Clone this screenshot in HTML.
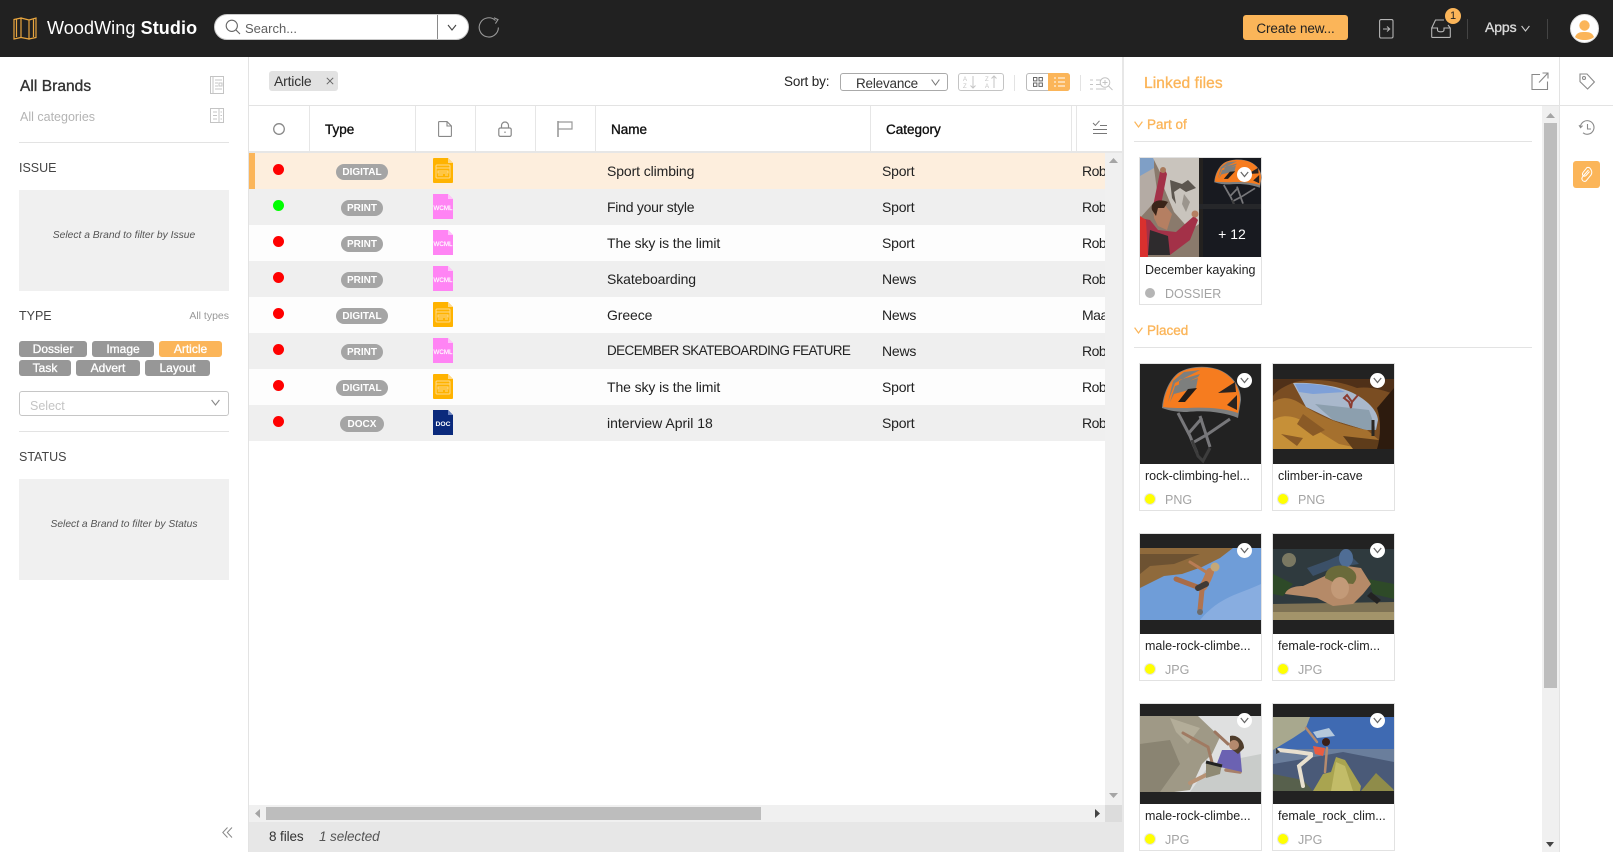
<!DOCTYPE html>
<html><head><meta charset="utf-8"><title>WoodWing Studio</title>
<style>
*{box-sizing:border-box}
html,body{margin:0;padding:0;width:1613px;height:852px;overflow:hidden;background:#fff;font-family:"Liberation Sans",sans-serif;color:#222}
.a{position:absolute}
.t{position:absolute;white-space:nowrap;line-height:18px}
.sb{-webkit-text-stroke:.35px currentColor}
svg{position:absolute;display:block;overflow:visible}
.b{filter:blur(.35px)}
.row{position:absolute;left:249px;width:856px;height:36px}
.row .dot{position:absolute;left:24px;top:11px;width:11px;height:11px;border-radius:50%;background:#f00}
.row .pill{position:absolute;top:11px;height:16px;border-radius:8px;background:#a5a5a5;color:#fff;font-size:10px;font-weight:700;text-align:center;line-height:17px}
.row .n{position:absolute;left:358px;top:9px;font-size:14px;line-height:18px;white-space:nowrap;letter-spacing:-.1px}
.row .c{position:absolute;left:633px;top:9px;font-size:14px;line-height:18px;letter-spacing:-.2px}
.row .r{position:absolute;left:833px;top:9px;width:23px;overflow:hidden;font-size:14px;line-height:18px;letter-spacing:-.5px}
.row svg{left:184px;top:5px}
.chip{position:absolute;height:16px;border-radius:3px;background:#979797;color:#fff;font-size:12px;text-align:center;line-height:16px;-webkit-text-stroke:.3px #fff}
.sep{position:absolute;top:106px;width:1px;height:46px;background:#e6e6e6}
.card{position:absolute;width:123px;height:148px;border:1px solid #e2e2e2;background:#fff}
.card svg.ph{left:0;top:0}
.card .ti{position:absolute;left:5px;top:103px;font-size:12.5px;line-height:18px;white-space:nowrap}
.card .d{position:absolute;left:5px;top:130px;width:10px;height:10px;border-radius:50%;background:#ff0;box-shadow:0 0 0 1px #e8e8e8}
.card .k{position:absolute;left:25px;top:127px;font-size:12.5px;line-height:18px;color:#a3a3a3}
.ch{position:absolute;left:97px;top:9px;width:15px;height:15px;border-radius:50%;background:#fff}
.ch svg{left:3px;top:4px}
</style></head><body>
<svg width="0" height="0" style="position:absolute"><defs>
<symbol id="dig" viewBox="0 0 20 25"><path d="M0 1Q0 0 1 0H15L20 5V24Q20 25 19 25H1Q0 25 0 24Z" fill="#ffb300"/><path d="M15 0L20 5H15Z" fill="#ffd98a"/><g fill="none" stroke="#ffd98a" stroke-width="1"><rect x="3" y="7" width="14" height="13" rx="1"/><path d="M3 10H17M5 13H15V15H5ZM5 17H10M12 17H15"/></g></symbol>
<symbol id="wcml" viewBox="0 0 20 25"><path d="M0 0H15L20 5V25H0Z" fill="#ff84f4"/><path d="M15 0L20 5H15Z" fill="#ffc4fa"/><text x="10" y="16" font-size="6.2" fill="#fff" stroke="#fff" stroke-width=".15" text-anchor="middle" font-family="Liberation Sans">WCML</text></symbol>
<symbol id="doc" viewBox="0 0 20 25"><path d="M0 0H15L20 5V25H0Z" fill="#0b2a7c"/><path d="M15 0L20 5H15Z" fill="#6b82bd"/><text x="10" y="16" font-size="6.8" font-weight="700" fill="#fff" text-anchor="middle" font-family="Liberation Sans">DOC</text></symbol>
<symbol id="helmet" viewBox="0 0 121 100" overflow="visible">
<g fill="none" stroke="#77777a" stroke-width="3"><path d="M38 49L50 72 57 89M60 52L70 83M90 55L68 70 54 78M62 54L48 70"/></g>
<g fill="none" stroke="#3d3d3d" stroke-width="3"><path d="M52 76L58 92 63 97 70 84"/></g>
<path d="M22 44C23 30 29 16 38 9 50 1 70 1 82 7 94 13 101 24 101 36L98 54C84 48 64 46 47 48 38 48 30 47 22 44Z" fill="#7d7f80"/>
<path d="M23 43C24 30 30 16 39 9 50 2 70 2 81 7 93 13 100 24 100 36L98 49C84 44 64 43 47 44 38 44 30 44 23 43Z" fill="#f67c1f"/>
<path d="M28 38L35 19 60 6 44 8 33 17Z M39 16L60 10 58 13 39 22Z M35 22L58 14 56 24 34 30 30 38Z" fill="#7d7f7e"/>
<path d="M48 25L57 24 45 38 38 38Z" fill="#221c18"/>
<path d="M78 29L95 18 96 28Z" fill="#2a2320"/><path d="M87 41L97 31 97 46Z" fill="#2a2320"/></symbol>
</defs></svg>

<!-- top bar -->
<div class="a" style="left:0;top:0;width:1613px;height:57px;background:#212121"></div>
<svg style="left:13px;top:17px" width="24" height="23" viewBox="0 0 24 23" fill="none" stroke="#e9a63f" stroke-width="1.2"><path d="M1 2.5L8 1V20.5L1 22ZM8 1L16 3V22L8 20.5ZM16 3L23 1V20.5L16 22ZM3.5 2.5V20M20.5 2.5V20"/></svg>
<div class="t" style="left:47px;top:19px;font-size:18px;color:#fff;letter-spacing:.1px">WoodWing <b>Studio</b></div>
<div class="a" style="left:214px;top:14px;width:255px;height:26px;border-radius:13px;background:#fff;border:1px solid #c9c9c9"></div>
<div class="a" style="left:437px;top:15px;width:1px;height:24px;background:#8a8a8a"></div>
<svg style="left:225px;top:19px" width="16" height="16" viewBox="0 0 16 16" fill="none" stroke="#666" stroke-width="1.1"><circle cx="6.8" cy="6.8" r="5.6"/><path d="M10.8 10.8L15 15"/></svg>
<div class="t" style="left:245px;top:20px;font-size:13px;color:#5f5f5f">Search...</div>
<svg style="left:447px;top:24px" width="10" height="7" viewBox="0 0 10 7" fill="none" stroke="#444" stroke-width="1.1"><path d="M1 1L5 6 9 1"/></svg>
<svg style="left:478px;top:17px" width="22" height="21" viewBox="0 0 22 21" fill="none" stroke="#9a9a9a" stroke-width="1.1"><path d="M17.5 3.5A9.6 9.6 0 1 0 20.4 10.5M16 .8L20 2.6 17.4 6.6"/></svg>
<div class="a" style="left:1243px;top:15px;width:105px;height:25px;border-radius:3px;background:#fbb559;color:#222;font-size:13.5px;line-height:27px;text-align:center;letter-spacing:-.1px">Create new...</div>
<svg style="left:1379px;top:19px" width="15" height="20" viewBox="0 0 15 20" fill="none" stroke="#b5b5b5" stroke-width="1.1"><rect x=".6" y=".6" width="13.4" height="18.4" rx="1.5"/><path d="M4 10H10.5M8 7.5L10.7 10 8 12.5"/></svg>
<svg style="left:1431px;top:19px" width="20" height="20" viewBox="0 0 20 20" fill="none" stroke="#b5b5b5" stroke-width="1.1"><path d="M.7 9L4.5 1H13M17 6L19.3 9V17.6Q19.3 18.4 18.5 18.4H1.5Q.7 18.4 .7 17.6V9H6.5V11C6.5 13.4 13 13.4 13 11V9H19.3"/></svg>
<div class="a" style="left:1445px;top:8px;width:16px;height:16px;border-radius:50%;background:#fbb559;color:#222;font-size:11px;line-height:16px;text-align:center">1</div>
<div class="a" style="left:1467px;top:19px;width:1px;height:20px;background:#444"></div>
<div class="t sb" style="left:1485px;top:18px;font-size:14px;color:#d9d9d9;letter-spacing:-.1px">Apps</div>
<svg style="left:1521px;top:25px" width="9" height="7" viewBox="0 0 9 7" fill="none" stroke="#ccc" stroke-width="1.1"><path d="M.6 1L4.5 6 8.4 1"/></svg>
<div class="a" style="left:1547px;top:19px;width:1px;height:20px;background:#444"></div>
<svg style="left:1570px;top:14px" width="29" height="29" viewBox="0 0 29 29"><circle cx="14.5" cy="14.5" r="14" fill="#fff" stroke="#ddd"/><circle cx="14.5" cy="11.5" r="5.2" fill="#fbb559"/><path d="M5 23C7 18 11 18 14.5 18S22 18 24 23C20 27 9 27 5 23Z" fill="#fbb559"/></svg>

<!-- sidebar -->
<div class="a" style="left:248px;top:57px;width:1px;height:795px;background:#e3e3e3"></div>
<div class="t sb" style="left:20px;top:78px;font-size:15.5px;color:#333;letter-spacing:.05px">All Brands</div>
<svg style="left:210px;top:76px" width="15" height="18" viewBox="0 0 15 18" fill="none" stroke="#c4c4c4"><rect x=".5" y=".5" width="13" height="17"/><path d="M3 1V17M5 4H12M5 7H8M5 10H8M5 13H12"/><rect x="9" y="7" width="3" height="3"/></svg>
<div class="t" style="left:20px;top:108px;font-size:12.5px;color:#b4b4b4">All categories</div>
<svg style="left:210px;top:108px" width="14" height="15" viewBox="0 0 14 15" fill="none" stroke="#c4c4c4"><rect x=".5" y=".5" width="13" height="14"/><path d="M9 1V14M3 4H7M3 7.5H7M3 11H7M10.5 4H12M10.5 7.5H12M10.5 11H12"/></svg>
<div class="a" style="left:19px;top:142px;width:210px;height:1px;background:#e3e3e3"></div>
<div class="t" style="left:19px;top:159px;font-size:12.5px;color:#444">ISSUE</div>
<div class="a" style="left:19px;top:190px;width:210px;height:101px;background:#f0f0f0"></div>
<div class="t" style="left:19px;width:210px;top:227px;text-align:center;font-size:10.3px;font-style:italic;color:#555">Select a Brand to filter by Issue</div>
<div class="t" style="left:19px;top:307px;font-size:12.5px;color:#444">TYPE</div>
<div class="t" style="left:129px;width:100px;top:307px;text-align:right;font-size:10.5px;color:#999">All types</div>
<div class="chip" style="left:19px;top:341px;width:68px">Dossier</div>
<div class="chip" style="left:92px;top:341px;width:62px">Image</div>
<div class="chip" style="left:159px;top:341px;width:63px;background:#fbb559">Article</div>
<div class="chip" style="left:19px;top:360px;width:52px">Task</div>
<div class="chip" style="left:76px;top:360px;width:64px">Advert</div>
<div class="chip" style="left:145px;top:360px;width:65px">Layout</div>
<div class="a" style="left:19px;top:391px;width:210px;height:25px;border:1px solid #c6c6c6;border-radius:3px"></div>
<div class="t" style="left:30px;top:397px;font-size:12.5px;color:#c4c4c4">Select</div>
<svg style="left:211px;top:399px" width="9" height="7" viewBox="0 0 9 7" fill="none" stroke="#888" stroke-width="1.1"><path d="M.6 1L4.5 6 8.4 1"/></svg>
<div class="a" style="left:19px;top:431px;width:210px;height:1px;background:#e3e3e3"></div>
<div class="t" style="left:19px;top:448px;font-size:12.5px;color:#444">STATUS</div>
<div class="a" style="left:19px;top:479px;width:210px;height:101px;background:#f0f0f0"></div>
<div class="t" style="left:19px;width:210px;top:516px;text-align:center;font-size:10.3px;font-style:italic;color:#555">Select a Brand to filter by Status</div>
<svg style="left:222px;top:827px" width="11" height="11" viewBox="0 0 11 11" fill="none" stroke="#888" stroke-width="1"><path d="M5.5 .5L.8 5.5 5.5 10.5M10 .5L5.3 5.5 10 10.5"/></svg>

<!-- toolbar -->
<div class="a" style="left:269px;top:71px;width:69px;height:20px;background:#e2e2e2;border-radius:3px"></div>
<div class="t" style="left:274px;top:72px;font-size:14px;color:#333;letter-spacing:-.2px">Article</div>
<svg style="left:326px;top:77px" width="8" height="8" viewBox="0 0 8 8" stroke="#666" stroke-width="1"><path d="M.8.8L7.2 7.2M7.2.8L.8 7.2"/></svg>
<div class="t" style="left:784px;top:73px;font-size:13.5px;color:#222;letter-spacing:-.15px">Sort by:</div>
<div class="a" style="left:840px;top:73px;width:108px;height:18px;border:1px solid #aaa;border-radius:3px"></div>
<div class="t" style="left:856px;top:75px;font-size:13.5px;color:#333;letter-spacing:-.2px">Relevance</div>
<svg style="left:931px;top:79px" width="9" height="7" viewBox="0 0 9 7" fill="none" stroke="#777" stroke-width="1"><path d="M.6 .6L4.5 6 8.4 .6"/></svg>
<div class="a" style="left:958px;top:73px;width:46px;height:18px;border:1px solid #c4c4c4;border-radius:3px"></div>
<svg style="left:963px;top:75px" width="37" height="14" viewBox="0 0 37 14" fill="none" stroke="#c4c4c4" stroke-width="1"><path d="M10 1V13M7.5 10.5L10 13 12.5 10.5M31 1V13M28.5 3.5L31 1 33.5 3.5"/><text x="0" y="6" font-size="6" fill="#c4c4c4" stroke="none" font-family="Liberation Sans">A</text><text x="0" y="13" font-size="6" fill="#c4c4c4" stroke="none" font-family="Liberation Sans">Z</text><text x="22" y="6" font-size="6" fill="#c4c4c4" stroke="none" font-family="Liberation Sans">Z</text><text x="22" y="13" font-size="6" fill="#c4c4c4" stroke="none" font-family="Liberation Sans">A</text></svg>
<div class="a" style="left:1014px;top:75px;width:1px;height:16px;background:#e3e3e3"></div>
<div class="a" style="left:1026px;top:73px;width:44px;height:18px;border:1px solid #bbb;border-radius:3px"></div>
<div class="a" style="left:1048px;top:73px;width:22px;height:18px;background:#fbb559;border-radius:0 3px 3px 0"></div>
<svg style="left:1033px;top:77px" width="10" height="10" viewBox="0 0 10 10" fill="none" stroke="#666"><rect x=".5" y=".5" width="3.4" height="3.4"/><rect x="6" y=".5" width="3.4" height="3.4"/><rect x=".5" y="6" width="3.4" height="3.4"/><rect x="6" y="6" width="3.4" height="3.4"/></svg>
<svg style="left:1054px;top:77px" width="11" height="10" viewBox="0 0 11 10" fill="none" stroke="#fff"><path d="M0 1H2M4 1H11M0 5H2M4 5H11M0 9H2M4 9H11"/></svg>
<div class="a" style="left:1080px;top:75px;width:1px;height:16px;background:#e3e3e3"></div>
<svg style="left:1090px;top:77px" width="23" height="15" viewBox="0 0 23 15" fill="none" stroke="#c4c4c4"><path d="M0 3H3M0 7.5H3M0 12H3M6 3H11M6 7.5H11M6 12H16"/><circle cx="15" cy="5.5" r="4.8"/><path d="M18.5 9L22.5 13M15 3V8M12.5 5.5H17.5"/></svg>

<div class="a" style="left:249px;top:105px;width:1364px;height:1px;background:#e3e3e3"></div>
<div class="a" style="left:249px;top:151px;width:873px;height:2px;background:#e6e6e6"></div>
<!-- header -->
<div class="sep" style="left:309px"></div><div class="sep" style="left:415px"></div><div class="sep" style="left:475px"></div><div class="sep" style="left:535px"></div><div class="sep" style="left:595px"></div><div class="sep" style="left:870px"></div><div class="sep" style="left:1071px"></div><div class="sep" style="left:1076px"></div>
<svg style="left:273px;top:123px" width="12" height="12"><circle cx="6" cy="6" r="5.3" fill="none" stroke="#888" stroke-width="1.3"/></svg>
<div class="t sb" style="left:325px;top:121px;font-size:13.5px;color:#111">Type</div>
<svg style="left:438px;top:121px" width="14" height="16" viewBox="0 0 14 16" fill="none" stroke="#888" stroke-width="1.1"><path d="M.6 1.4Q.6.6 1.4.6H9L13.4 5V14.6Q13.4 15.4 12.6 15.4H1.4Q.6 15.4.6 14.6ZM9 .6V5H13.4"/></svg>
<svg style="left:498px;top:121px" width="14" height="16" viewBox="0 0 14 16" fill="none" stroke="#888" stroke-width="1.2"><rect x=".8" y="7" width="12.4" height="8.4" rx="1.5"/><path d="M3.5 7V4.5A3.5 3.5 0 0 1 10.5 4.5V7M7 10.5V12"/></svg>
<svg style="left:557px;top:121px" width="16" height="16" viewBox="0 0 16 16" fill="none" stroke="#999" stroke-width="1.2"><path d="M1 0V16" stroke-width="1.6"/><path d="M1 1H15V8H1"/></svg>
<div class="t sb" style="left:611px;top:121px;font-size:13.5px;color:#111">Name</div>
<div class="t sb" style="left:886px;top:121px;font-size:13.5px;color:#111">Category</div>
<svg style="left:1093px;top:120px" width="14" height="15" viewBox="0 0 14 15" fill="none" stroke="#777" stroke-width="1"><path d="M0 3L2.4 5.4 6.5 .8M7 5.5H14M0 9.5H14M0 13.5H14"/></svg>

<!-- rows -->
<div class="row" style="top:153px;background:#fdeedd"><div class="a" style="left:0;top:0;width:6px;height:36px;background:#fbb559"></div><div class="dot"></div><div class="pill" style="left:87px;width:52px">DIGITAL</div><svg width="20" height="25"><use href="#dig"/></svg><div class="n">Sport climbing</div><div class="c">Sport</div><div class="r">Rob</div></div>
<div class="row" style="top:189px;background:#efefef"><div class="dot" style="background:#0f0"></div><div class="pill" style="left:92px;width:42px">PRINT</div><svg width="20" height="25"><use href="#wcml"/></svg><div class="n" style="letter-spacing:-.25px">Find your style</div><div class="c">Sport</div><div class="r">Rob</div></div>
<div class="row" style="top:225px;background:#fdfdfd"><div class="dot"></div><div class="pill" style="left:92px;width:42px">PRINT</div><svg width="20" height="25"><use href="#wcml"/></svg><div class="n">The sky is the limit</div><div class="c">Sport</div><div class="r">Rob</div></div>
<div class="row" style="top:261px;background:#efefef"><div class="dot"></div><div class="pill" style="left:92px;width:42px">PRINT</div><svg width="20" height="25"><use href="#wcml"/></svg><div class="n">Skateboarding</div><div class="c">News</div><div class="r">Rob</div></div>
<div class="row" style="top:297px;background:#fdfdfd"><div class="dot"></div><div class="pill" style="left:87px;width:52px">DIGITAL</div><svg width="20" height="25"><use href="#dig"/></svg><div class="n">Greece</div><div class="c">News</div><div class="r">Maa</div></div>
<div class="row" style="top:333px;background:#efefef"><div class="dot"></div><div class="pill" style="left:92px;width:42px">PRINT</div><svg width="20" height="25"><use href="#wcml"/></svg><div class="n" style="font-size:13.5px;letter-spacing:-.6px">DECEMBER SKATEBOARDING FEATURE</div><div class="c">News</div><div class="r">Rob</div></div>
<div class="row" style="top:369px;background:#fdfdfd"><div class="dot"></div><div class="pill" style="left:87px;width:52px">DIGITAL</div><svg width="20" height="25"><use href="#dig"/></svg><div class="n">The sky is the limit</div><div class="c">Sport</div><div class="r">Rob</div></div>
<div class="row" style="top:405px;background:#efefef"><div class="dot"></div><div class="pill" style="left:91px;width:44px">DOCX</div><svg width="20" height="25"><use href="#doc"/></svg><div class="n" style="letter-spacing:0">interview April 18</div><div class="c">Sport</div><div class="r">Rob</div></div>

<!-- main scrollbars -->
<div class="a" style="left:1105px;top:153px;width:17px;height:652px;background:#f0f0f0"></div>
<svg style="left:1109px;top:158px" width="9" height="5"><path d="M0 5L4.5 0 9 5Z" fill="#a5a5a5"/></svg>
<svg style="left:1109px;top:793px" width="9" height="5"><path d="M0 0L4.5 5 9 0Z" fill="#a5a5a5"/></svg>
<div class="a" style="left:249px;top:805px;width:856px;height:17px;background:#f0f0f0"></div>
<div class="a" style="left:1105px;top:805px;width:17px;height:17px;background:#dcdcdc"></div>
<div class="a" style="left:266px;top:807px;width:495px;height:13px;background:#bdbdbd"></div>
<svg style="left:255px;top:809px" width="5" height="9"><path d="M5 0L0 4.5 5 9Z" fill="#a5a5a5"/></svg>
<svg style="left:1095px;top:809px" width="5" height="9"><path d="M0 0L5 4.5 0 9Z" fill="#444"/></svg>
<div class="a" style="left:249px;top:822px;width:873px;height:30px;background:#e7e7e7"></div>
<div class="t" style="left:269px;top:828px;font-size:13.5px;color:#333;letter-spacing:-.1px">8 files</div>
<div class="t" style="left:319px;top:828px;font-size:13.5px;font-style:italic;color:#555;letter-spacing:-.1px">1 selected</div>
<div class="a" style="left:1122px;top:57px;width:2px;height:795px;background:#e7e7e7"></div>

<!-- linked files panel -->
<div class="t sb" style="left:1144px;top:75px;font-size:15.5px;color:#fbb559;letter-spacing:.1px">Linked files</div>
<svg style="left:1531px;top:72px" width="18" height="18" viewBox="0 0 18 18" fill="none" stroke="#888" stroke-width="1.1"><path d="M9 2.5H1V17.5H16.5V9.5M8 10.5L16.5 1.5M11.5 1H17V6.5"/></svg>
<div class="a" style="left:1559px;top:57px;width:1px;height:795px;background:#e3e3e3"></div>
<div class="a" style="left:1542px;top:106px;width:17px;height:746px;background:#f0f0f0"></div>
<svg style="left:1546px;top:113px" width="9" height="5"><path d="M0 5L4.5 0 9 5Z" fill="#a5a5a5"/></svg>
<div class="a" style="left:1544px;top:123px;width:13px;height:565px;background:#bdbdbd"></div>
<svg style="left:1546px;top:842px" width="8" height="5"><path d="M0 0L4 5 8 0Z" fill="#444"/></svg>

<svg style="left:1134px;top:121px" width="9" height="7" viewBox="0 0 9 7" fill="none" stroke="#fbb559" stroke-width="1.2"><path d="M.6 .6L4.5 6 8.4 .6"/></svg>
<div class="t sb" style="left:1147px;top:116px;font-size:13.5px;color:#fbb559">Part of</div>
<div class="a" style="left:1134px;top:141px;width:398px;height:1px;background:#e3e3e3"></div>
<svg style="left:1134px;top:327px" width="9" height="7" viewBox="0 0 9 7" fill="none" stroke="#fbb559" stroke-width="1.2"><path d="M.6 .6L4.5 6 8.4 .6"/></svg>
<div class="t sb" style="left:1147px;top:322px;font-size:13.5px;color:#fbb559">Placed</div>
<div class="a" style="left:1134px;top:347px;width:398px;height:1px;background:#e3e3e3"></div>

<!-- dossier -->
<div class="card" style="left:1139px;top:157px;height:148px">
<svg class="ph" width="121" height="99" viewBox="0 0 121 99" style="left:0;top:0">
<rect width="121" height="99" fill="#181a20"/>
<rect x="59" width="4" height="99" fill="#23211f"/><rect x="59" y="47" width="62" height="4" fill="#26272a"/>
<clipPath id="dl"><rect width="59" height="99"/></clipPath>
<g clip-path="url(#dl)"><g class="b"><rect width="59" height="99" fill="#8a7a6c"/><path d="M0 0H14V20L0 30Z" fill="#7f9fc6"/><path d="M0 18L14 10 18 40 0 60Z" fill="#b4aba4"/>
<path d="M13 0H59V66L50 72 34 54 24 30 20 14Z" fill="#c9c4bd"/><path d="M30 22L42 26 48 22 56 30 46 34 40 30 34 34 36 46 32 40Z" fill="#5c564f"/><path d="M44 36L50 44 46 54 42 46Z" fill="#9b958d"/>
<path d="M0 60L10 62 18 72 36 74 54 58 58 62 50 82 30 97H0Z" fill="#a33148"/>
<path d="M13 48L20 14 24 10 27 16 20 52Z" fill="#a33148"/><circle cx="23" cy="12" r="3" fill="#a87a5c"/><path d="M0 58L6 62 8 99H0Z" fill="#d9302e"/>
<path d="M10 72L28 78 30 97H8Z" fill="#2e2b2d"/><path d="M13 48L24 46 32 56 27 72 18 68 14 60Z" fill="#b57f62"/><path d="M12 52C10 44 18 40 28 44L24 50 18 50 16 58Z" fill="#3a2418"/><circle cx="55" cy="56" r="3.5" fill="#b57f62"/></g></g>
<g transform="translate(61,0) scale(.6,.55)"><use href="#helmet" width="121" height="100"/></g>
<rect x="59" y="46" width="62" height="5" fill="#26272a"/><rect x="63" y="51" width="58" height="48" fill="#181a20"/>
<text x="92" y="81" font-size="14" fill="#fff" text-anchor="middle" font-family="Liberation Sans">+ 12</text>
</svg>
<div class="ch" style="left:97px;top:9px"><svg width="9" height="7" viewBox="0 0 9 7" fill="none" stroke="#666" stroke-width="1.2"><path d="M.8 1L4.5 5.5 8.2 1"/></svg></div>
<div class="ti" style="top:103px">December kayaking</div>
<div class="d" style="background:#b5b5b5;box-shadow:none"></div><div class="k">DOSSIER</div>
</div>

<!-- helmet -->
<div class="card" style="left:1139px;top:363px">
<svg class="ph" width="121" height="100" viewBox="0 0 121 100"><rect width="121" height="100" fill="#222"/><use href="#helmet" width="121" height="100"/></svg>
<div class="ch"><svg width="9" height="7" viewBox="0 0 9 7" fill="none" stroke="#666" stroke-width="1.2"><path d="M.8 1L4.5 5.5 8.2 1"/></svg></div>
<div class="ti">rock-climbing-hel...</div><div class="d"></div><div class="k">PNG</div></div>

<!-- cave -->
<div class="card" style="left:1272px;top:363px">
<svg class="ph" width="121" height="100" viewBox="0 0 121 100"><rect width="121" height="100" fill="#222"/>
<clipPath id="c1"><rect y="15" width="121" height="70"/></clipPath>
<g clip-path="url(#c1)"><g class="b"><rect y="15" width="121" height="70" fill="#7a4d22"/>
<path d="M20 19C40 18 66 22 80 29 94 36 104 46 105 56L103 66 93 66 60 56 33 43Z" fill="#a9b8cc"/>
<path d="M22 20C40 19 60 22 72 28L40 30 26 28Z" fill="#7ea0d8"/>
<path d="M42 40L96 46 103 66 93 66 60 56Z" fill="#8c9fae"/>
<path d="M0 38C14 30 22 36 33 43 46 52 70 62 94 66L106 76V85H0Z" fill="#a5702e"/>
<path d="M0 56C16 46 34 58 50 70L66 80 90 85H0Z" fill="#c69038"/><path d="M30 50L52 66 40 72 24 60ZM8 70L30 74 24 82Z" fill="#8a5a26"/><path d="M70 72L106 76 121 85H80Z" fill="#5e3c1a"/>
<path d="M0 15H121V30C110 26 96 22 84 24 64 16 40 14 22 18 12 22 4 26 0 32Z" fill="#4f3018"/>
<path d="M104 44L121 24V85H104C108 72 108 56 104 44Z" fill="#2d1b0e"/>
<path d="M74 31L79 38 78 44 76 38 71 34ZM79 38L85 31" stroke="#8c3d32" stroke-width="2" fill="none"/>
<path d="M100 56V72" stroke="#2b2722" stroke-width="3"/></g></g>
</svg>
<div class="ch"><svg width="9" height="7" viewBox="0 0 9 7" fill="none" stroke="#666" stroke-width="1.2"><path d="M.8 1L4.5 5.5 8.2 1"/></svg></div>
<div class="ti">climber-in-cave</div><div class="d"></div><div class="k">PNG</div></div>

<!-- male climber 1 -->
<div class="card" style="left:1139px;top:533px">
<svg class="ph" width="121" height="100" viewBox="0 0 121 100"><rect width="121" height="100" fill="#222"/>
<clipPath id="c2"><rect y="14" width="121" height="72"/></clipPath>
<g clip-path="url(#c2)"><g class="b"><rect y="14" width="121" height="72" fill="#6f9dd8"/><path d="M60 86C80 62 100 60 121 50V86Z" fill="#88ade0"/>
<path d="M0 14H93L80 24 62 33 42 40 24 42 0 54Z" fill="#8f6a3c"/><path d="M0 20H60L34 30 10 32 0 40Z" fill="#6d5232"/>
<g fill="none" stroke-linecap="round"><path d="M50 28L66 38" stroke="#b97c54" stroke-width="3"/><path d="M70 38C68 44 66 48 63 53" stroke="#b97c54" stroke-width="8"/><path d="M60 54L36 45" stroke="#a96c48" stroke-width="5"/><path d="M62 56L60 76" stroke="#b17450" stroke-width="5"/><path d="M58 54L66 50" stroke="#403a36" stroke-width="6"/></g>
<circle cx="75" cy="33" r="4.5" fill="#c4a878"/><circle cx="60" cy="78" r="3" fill="#6c6c6c"/></g></g>
</svg>
<div class="ch"><svg width="9" height="7" viewBox="0 0 9 7" fill="none" stroke="#666" stroke-width="1.2"><path d="M.8 1L4.5 5.5 8.2 1"/></svg></div>
<div class="ti">male-rock-climbe...</div><div class="d"></div><div class="k">JPG</div></div>

<!-- female climber 1 -->
<div class="card" style="left:1272px;top:533px">
<svg class="ph" width="121" height="100" viewBox="0 0 121 100"><rect width="121" height="100" fill="#222"/>
<clipPath id="c3"><rect y="15" width="121" height="71"/></clipPath>
<g clip-path="url(#c3)"><g class="b"><rect y="15" width="121" height="71" fill="#2f3a3e"/><path d="M0 40L20 50 10 62 0 60ZM95 45L121 50V65L100 60Z" fill="#2e4a28"/><circle cx="16" cy="26" r="7" fill="#7a7862"/>
<path d="M0 70L121 68V86H0Z" fill="#7e7254"/><path d="M0 78H121V86H0Z" fill="#a3946a"/>
<path d="M30 52L52 42 60 30 88 34 98 50 90 60 80 70 60 72 44 64 12 60C14 54 22 52 30 52Z" fill="#b58a68"/>
<path d="M34 34L56 26 74 18 86 30 60 34 40 42Z" fill="#3b5068"/><ellipse cx="73" cy="24" rx="7" ry="9" fill="#4f6d95"/>
<path d="M52 44C52 34 62 30 72 32 84 36 86 44 80 50L60 48Z" fill="#6a6a3a"/><ellipse cx="67" cy="54" rx="9" ry="11" fill="#c39a78"/>
<path d="M98 58L108 66 104 70 94 62Z" fill="#222"/></g></g>
</svg>
<div class="ch"><svg width="9" height="7" viewBox="0 0 9 7" fill="none" stroke="#666" stroke-width="1.2"><path d="M.8 1L4.5 5.5 8.2 1"/></svg></div>
<div class="ti">female-rock-clim...</div><div class="d"></div><div class="k">JPG</div></div>

<!-- male climber 2 -->
<div class="card" style="left:1139px;top:703px">
<svg class="ph" width="121" height="100" viewBox="0 0 121 100"><rect width="121" height="100" fill="#222"/>
<clipPath id="c4"><rect y="12" width="121" height="76"/></clipPath>
<g clip-path="url(#c4)"><g class="b"><rect y="12" width="121" height="76" fill="#dfe0e0"/><path d="M70 60L121 50V88H50Z" fill="#c9ccca"/>
<path d="M0 12H58L80 33 72 50 62 60 50 86 34 88H0Z" fill="#9f9986"/><path d="M0 40L30 36 40 60 20 88H0Z" fill="#8a8472"/><path d="M30 14L60 24 48 40 36 28Z" fill="#b3ad99"/>
<g fill="none" stroke-linecap="round"><path d="M43 29L68 43 74 66" stroke="#a07a62" stroke-width="3"/><path d="M75 28L88 40" stroke="#9c7660" stroke-width="3"/><path d="M72 68L50 79" stroke="#b79274" stroke-width="4"/><path d="M100 68L86 66" stroke="#a7806a" stroke-width="3.5"/></g>
<path d="M82 46L100 46 102 68 76 62Z" fill="#6b62b2"/><path d="M66 58L82 60 80 70 66 74Z" fill="#8f8a74"/><path d="M66 58L82 62" stroke="#222" stroke-width="3"/><path d="M90 32C96 30 104 36 104 44L98 50 90 44Z" fill="#4f3d2b"/><circle cx="94" cy="41" r="5" fill="#b58a6e"/></g></g>
</svg>
<div class="ch"><svg width="9" height="7" viewBox="0 0 9 7" fill="none" stroke="#666" stroke-width="1.2"><path d="M.8 1L4.5 5.5 8.2 1"/></svg></div>
<div class="ti">male-rock-climbe...</div><div class="d"></div><div class="k">JPG</div></div>

<!-- female climber 2 -->
<div class="card" style="left:1272px;top:703px">
<svg class="ph" width="121" height="100" viewBox="0 0 121 100"><rect width="121" height="100" fill="#222"/>
<clipPath id="c5"><rect y="13" width="121" height="74"/></clipPath>
<g clip-path="url(#c5)"><g class="b"><rect y="13" width="121" height="74" fill="#3f6ab2"/><path d="M0 45H121V87H0Z" fill="#6a7e9c"/><path d="M40 28L56 24 62 32 44 34Z" fill="#b4c8dc"/>
<path d="M30 55L70 48 121 58V87H0V60Z" fill="#4a5a78"/>
<path d="M0 70L30 76 40 87H0Z" fill="#57604c"/>
<path d="M0 13H37L32 26 20 34 0 46Z" fill="#a8a88e"/>
<path d="M40 87L50 70 58 68 63 53 72 56 88 82 87 87Z" fill="#a9a450"/><path d="M58 87L63 58 72 62 80 87Z" fill="#c2bc68"/><path d="M88 87L103 69 120 85 121 87Z" fill="#8f8c4a"/>
<g fill="none" stroke-linecap="round"><path d="M33 24L44 38" stroke="#b58b6e" stroke-width="2.5"/><path d="M54 44L52 68" stroke="#b58b6e" stroke-width="2.5"/><path d="M38 50L24 48 6 46" stroke="#e8e0cf" stroke-width="4"/><path d="M38 52L26 62 30 82" stroke="#e8e0cf" stroke-width="4"/></g>
<path d="M40 42L52 44 50 52 42 50Z" fill="#e85c42"/><circle cx="53" cy="38" r="4" fill="#3a1f18"/><path d="M3 44L7 48 3 50Z" fill="#333"/></g></g>
</svg>
<div class="ch"><svg width="9" height="7" viewBox="0 0 9 7" fill="none" stroke="#666" stroke-width="1.2"><path d="M.8 1L4.5 5.5 8.2 1"/></svg></div>
<div class="ti">female_rock_clim...</div><div class="d"></div><div class="k">JPG</div></div>

<!-- rail -->
<svg style="left:1579px;top:73px" width="16" height="17" viewBox="0 0 16 17" fill="none" stroke="#8a8a8a" stroke-width="1.1"><path d="M1 1H8L15.4 9 8.6 16 1 8.6ZM1 1V8.6"/><circle cx="5" cy="5" r="1.5"/></svg>
<svg style="left:1579px;top:120px" width="16" height="16" viewBox="0 0 16 16" fill="none" stroke="#8a8a8a" stroke-width="1.1"><path d="M1.4 7A6.8 6.8 0 1 1 4 12.8M0 5.2L1.6 7.6 3.6 5.6M8.5 4V9H12"/></svg>
<div class="a" style="left:1573px;top:161px;width:27px;height:27px;background:#fbb559;border-radius:3px"></div>
<svg style="left:1581px;top:166px" width="12" height="17" viewBox="0 0 12 17" fill="none" stroke="#fff" stroke-width="1"><path d="M7.5 4L1.8 10.5C-.4 13 2 16.5 5 15L10 9C12 6 9.5 .5 6 1.5L2 6.5C.5 9 3 11.5 5 9.5L8.5 5.5"/></svg>
</body></html>
